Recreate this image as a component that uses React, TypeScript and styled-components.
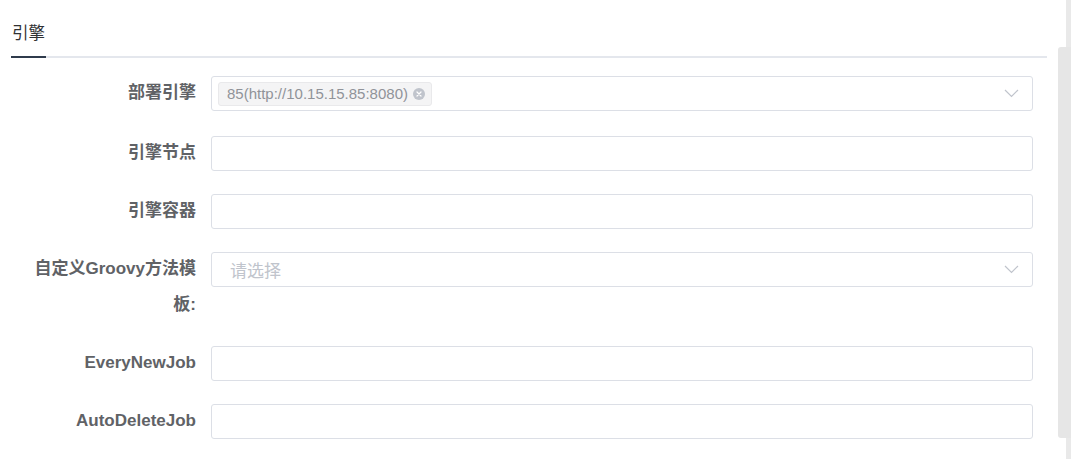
import React from "react";
import styled, { createGlobalStyle } from "styled-components";

const GlobalStyle = createGlobalStyle`
  html, body { margin: 0; padding: 0; background: #ffffff; }
  body {
    font-family: "Liberation Sans", "Noto Sans CJK SC", sans-serif;
    -webkit-font-smoothing: antialiased;
  }
  * { box-sizing: border-box; }
`;

const Page = styled.div`
  position: relative;
  width: 1071px;
  height: 459px;
  overflow: hidden;
  padding: 13px 24px 0 11px;
`;

const TabNav = styled.div`
  display: flex;
  border-bottom: 2px solid #e4e7ed;
`;

const TabItem = styled.div`
  position: relative;
  margin-bottom: -2px;
  padding: 0 1px 3px 1px;
  font-size: 16.5px;
  line-height: 40px;
  color: #303133;
  border-bottom: 2px solid #2f3b4c;
`;

const Form = styled.div`
  display: flex;
  flex-direction: column;
  margin-top: 17px;
  padding-right: 14px;
`;

const Row = styled.div<{ $gap: number }>`
  display: flex;
  align-items: flex-start;
  margin-bottom: ${(p) => p.$gap}px;
`;

const Label = styled.label`
  flex-shrink: 0;
  width: 200px;
  padding: 0 15px 0 18px;
  text-align: right;
  font-size: 17px;
  font-weight: bold;
  line-height: 36px;
  color: #606266;
`;

const Field = styled.div<{ $pad: number }>`
  flex: 1;
  height: 35px;
  margin-top: 1px;
  display: flex;
  align-items: center;
  padding: 0 13px 0 ${(p) => p.$pad}px;
  border: 1px solid #dcdfe6;
  border-radius: 3px;
  background: #fff;
`;

const Grow = styled.div`
  flex: 1;
  display: flex;
  align-items: center;
`;

const Placeholder = styled.span`
  font-size: 17px;
  color: #c0c4cc;
`;

const Tag = styled.span`
  display: inline-flex;
  align-items: center;
  gap: 5px;
  height: 24px;
  padding: 0 6px 0 8px;
  background: #f4f4f5;
  border: 1px solid #e9e9eb;
  border-radius: 3px;
  font-size: 15px;
  color: #909399;
`;

const CloseDot = styled.span`
  display: inline-flex;
  align-items: center;
  justify-content: center;
  width: 12px;
  height: 12px;
  border-radius: 50%;
  background: #c0c4cc;
`;

const ScrollTrack = styled.div`
  position: absolute;
  top: 0;
  right: 0;
  width: 5px;
  height: 459px;
  background: #e9e9e9;
`;

const ScrollThumb = styled.div`
  position: absolute;
  top: 47px;
  right: 0;
  width: 13px;
  height: 391px;
  background: #e6e6e6;
  border-radius: 3px 0 0 3px;
`;

const Chevron = () => (
  <svg width="15" height="9" viewBox="0 0 15 9">
    <polyline points="1,1 7.5,7.5 14,1" fill="none" stroke="#c0c4cc" strokeWidth="1.2" />
  </svg>
);

const CloseIcon = () => (
  <svg width="6" height="6" viewBox="0 0 6 6">
    <path d="M1 1 L5 5 M5 1 L1 5" stroke="#ffffff" strokeWidth="1.2" strokeLinecap="round" />
  </svg>
);

export default function App() {
  return (
    <>
      <GlobalStyle />
      <Page>
        <TabNav>
          <TabItem>引擎</TabItem>
        </TabNav>
        <Form>
          <Row $gap={24}>
            <Label>部署引擎</Label>
            <Field $pad={6}>
              <Grow>
                <Tag>
                  85(http://10.15.15.85:8080)
                  <CloseDot>
                    <CloseIcon />
                  </CloseDot>
                </Tag>
              </Grow>
              <Chevron />
            </Field>
          </Row>
          <Row $gap={22}>
            <Label>引擎节点</Label>
            <Field $pad={18} />
          </Row>
          <Row $gap={22}>
            <Label>引擎容器</Label>
            <Field $pad={18} />
          </Row>
          <Row $gap={22}>
            <Label>自定义Groovy方法模板:</Label>
            <Field $pad={18}>
              <Grow>
                <Placeholder>请选择</Placeholder>
              </Grow>
              <Chevron />
            </Field>
          </Row>
          <Row $gap={22}>
            <Label>EveryNewJob</Label>
            <Field $pad={18} />
          </Row>
          <Row $gap={22}>
            <Label>AutoDeleteJob</Label>
            <Field $pad={18} />
          </Row>
        </Form>
        <ScrollTrack />
        <ScrollThumb />
      </Page>
    </>
  );
}
